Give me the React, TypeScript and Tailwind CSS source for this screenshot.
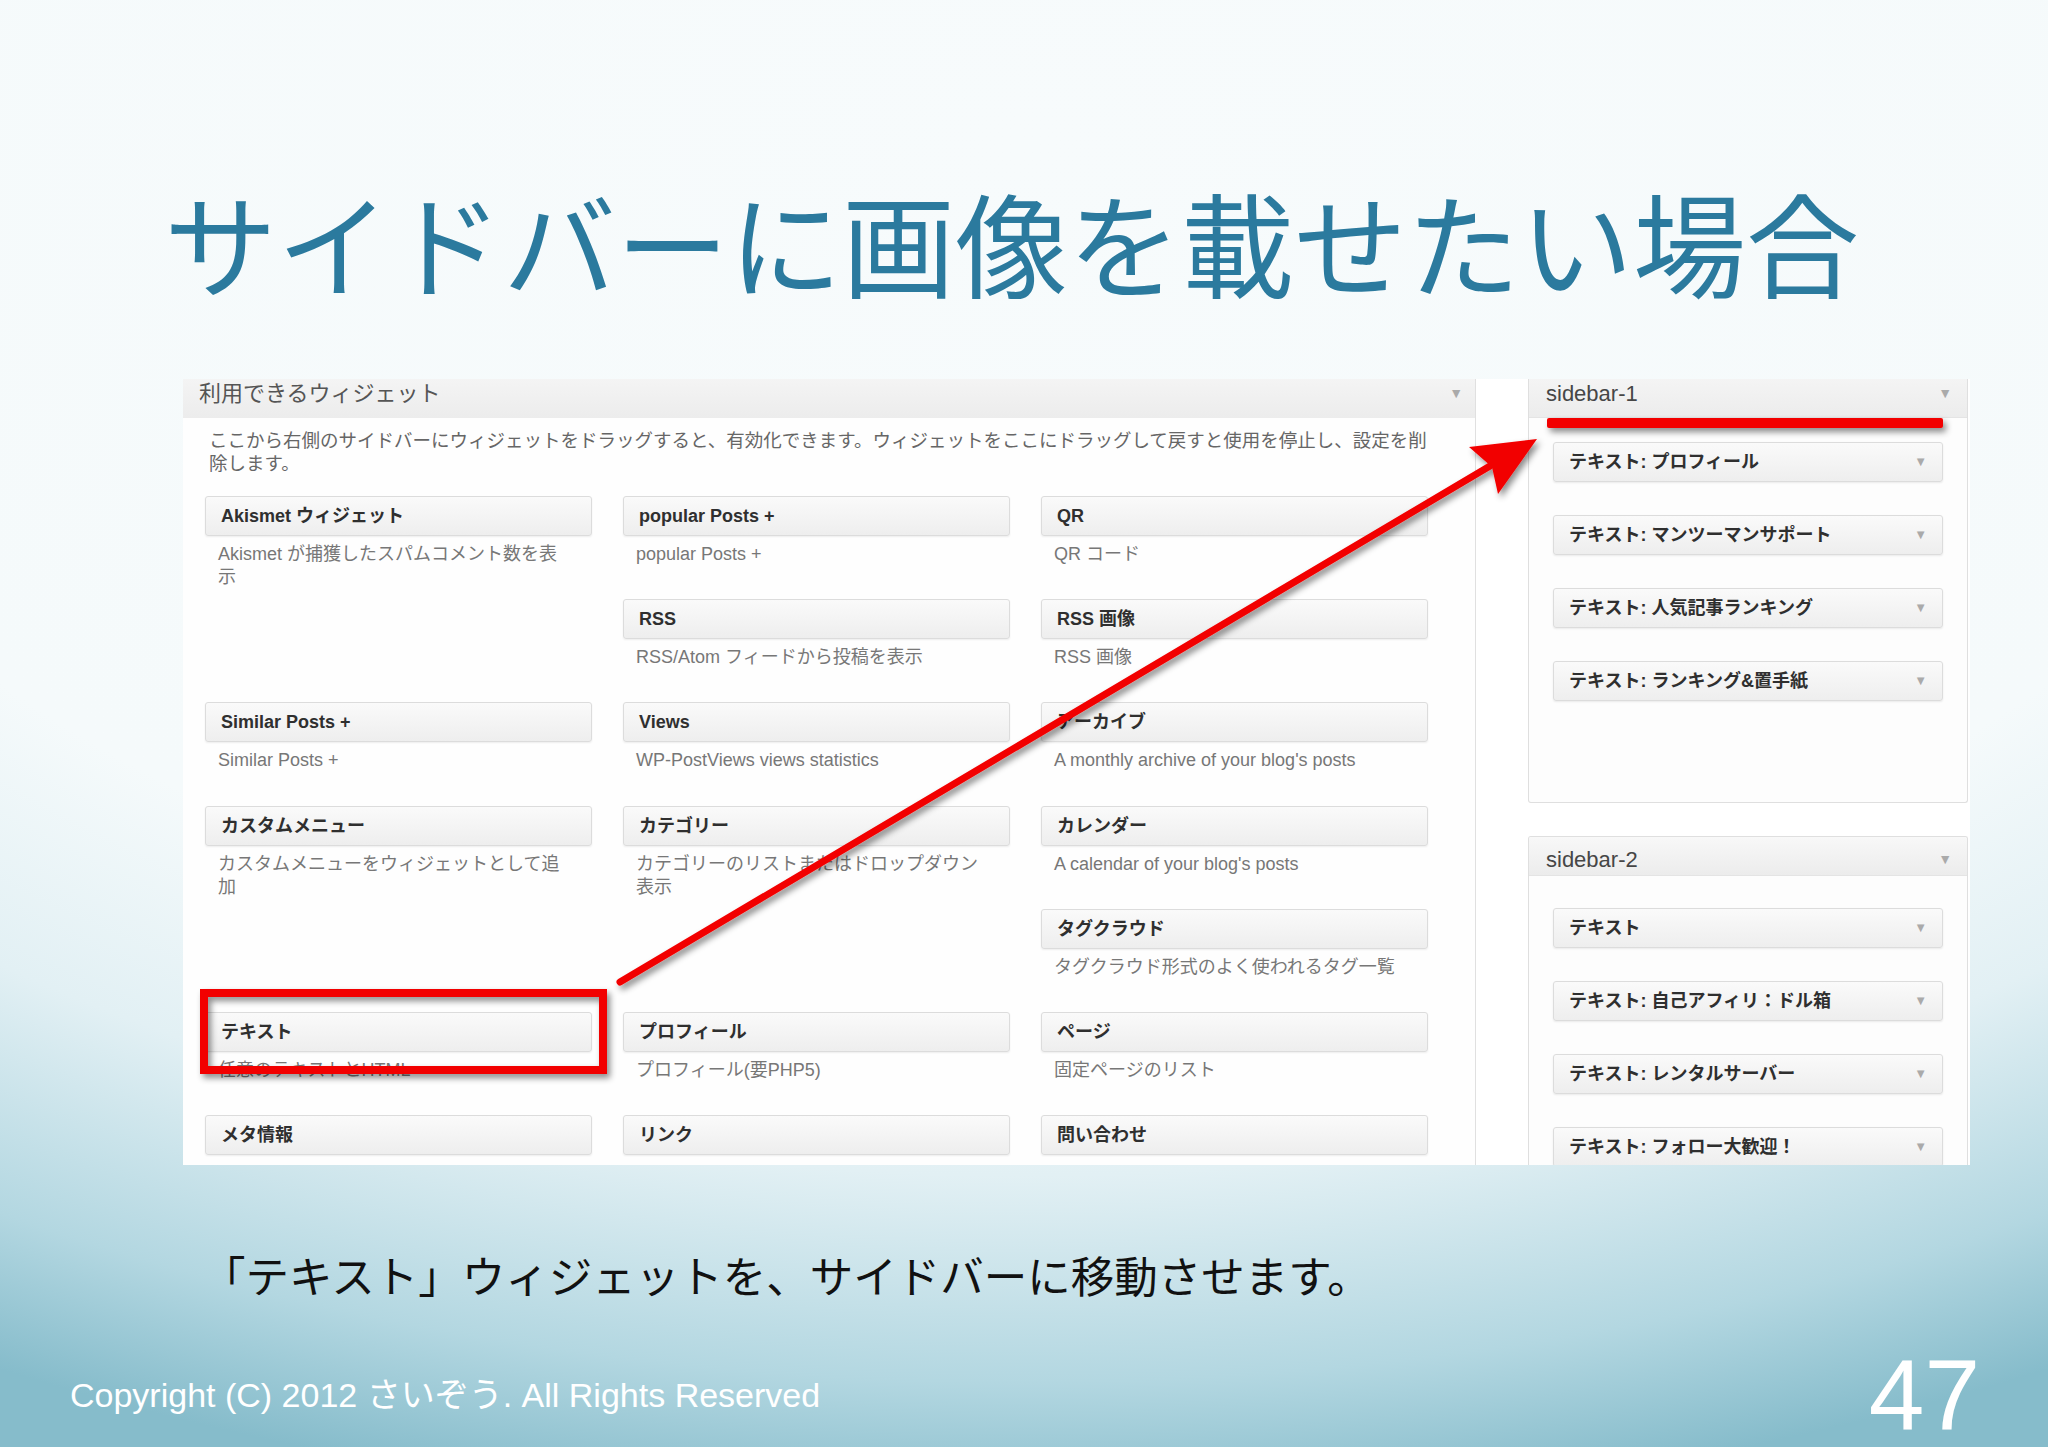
import React from "react";

type W = { t: string; d?: string[] } | null;

const rows: W[][] = [
  [
    { t: "Akismet ウィジェット", d: ["Akismet が捕獲したスパムコメント数を表", "示"] },
    { t: "popular Posts +", d: ["popular Posts +"] },
    { t: "QR", d: ["QR コード"] },
  ],
  [null, { t: "RSS", d: ["RSS/Atom フィードから投稿を表示"] }, { t: "RSS 画像", d: ["RSS 画像"] }],
  [
    { t: "Similar Posts +", d: ["Similar Posts +"] },
    { t: "Views", d: ["WP-PostViews views statistics"] },
    { t: "アーカイブ", d: ["A monthly archive of your blog's posts"] },
  ],
  [
    { t: "カスタムメニュー", d: ["カスタムメニューをウィジェットとして追", "加"] },
    { t: "カテゴリー", d: ["カテゴリーのリストまたはドロップダウン", "表示"] },
    { t: "カレンダー", d: ["A calendar of your blog's posts"] },
  ],
  [null, null, { t: "タグクラウド", d: ["タグクラウド形式のよく使われるタグ一覧"] }],
  [
    { t: "テキスト", d: ["任意のテキストとHTML"] },
    { t: "プロフィール", d: ["プロフィール(要PHP5)"] },
    { t: "ページ", d: ["固定ページのリスト"] },
  ],
  [{ t: "メタ情報" }, { t: "リンク" }, { t: "問い合わせ" }],
];

const sidebar1 = [
  "テキスト: プロフィール",
  "テキスト: マンツーマンサポート",
  "テキスト: 人気記事ランキング",
  "テキスト: ランキング&置手紙",
];

const sidebar2 = [
  "テキスト",
  "テキスト: 自己アフィリ：ドル箱",
  "テキスト: レンタルサーバー",
  "テキスト: フォロー大歓迎！",
];

function WidgetCell({ w }: { w: W }) {
  if (!w) return <div />;
  return (
    <div className="flex flex-col">
      <div className="h-[40px] shrink-0 rounded-[3px] border border-[#dcdcdc] bg-[linear-gradient(to_bottom,#fafafa,#eeeeee)] pl-[15px] text-[18px] font-bold leading-[38px] whitespace-nowrap text-[#2f2f2f] shadow-[0_1px_2px_rgba(0,0,0,0.07)]">
        {w.t}
      </div>
      {w.d && (
        <div className="mt-[7px] pl-[13px] text-[18px] leading-[23px] whitespace-nowrap text-[#777]">
          {w.d.map((line, i) => (
            <div key={i}>{line}</div>
          ))}
        </div>
      )}
    </div>
  );
}

function SideBox({ t }: { t: string }) {
  return (
    <div className="flex h-[40px] shrink-0 items-center justify-between rounded-[3px] border border-[#dcdcdc] bg-[linear-gradient(to_bottom,#fafafa,#eeeeee)] pl-[15px] pr-[15px] shadow-[0_1px_2px_rgba(0,0,0,0.08)]">
      <span className="text-[18px] font-bold whitespace-nowrap text-[#2f2f2f]">{t}</span>
      <span className="text-[13px] text-[#aaaaaa]">▼</span>
    </div>
  );
}

function SideHeader({ label, cropped }: { label: string; cropped?: boolean }) {
  return (
    <div
      className={
        cropped
          ? "flex h-[39px] shrink-0 items-center justify-between border-b border-[#e4e4e4] bg-[linear-gradient(to_bottom,#f4f4f4,#ececec)] pb-[10px] pl-[17px] pr-[15px]"
          : "flex h-[39px] shrink-0 items-center justify-between border-b border-[#e4e4e4] bg-[linear-gradient(to_bottom,#f8f8f8,#ececec)] pt-[6px] pl-[17px] pr-[15px]"
      }
    >
      <span className="text-[22px] text-[#464646]">{label}</span>
      <span className="text-[14px] text-[#aaaaaa]">▼</span>
    </div>
  );
}

export default function App() {
  return (
    <div className="relative h-[1447px] w-[2048px] overflow-hidden bg-[radial-gradient(ellipse_110%_95%_at_50%_10%,#f7fbfc_0%,#f5fafb_60%,#e2f0f4_75%,#b3d7e1_90%,#86bccb_100%)] font-['Liberation_Sans','Noto_Sans_CJK_JP',sans-serif]">
      <div className="flex flex-col">
        <h1 className="mt-[184px] pl-[164px] font-['Noto_Sans_CJK_JP',sans-serif] text-[113px] font-normal leading-[113px] whitespace-nowrap text-[#2b7a9e]">
          サイドバーに画像を載せたい場合
        </h1>

        <div className="mt-[82px] ml-[183px] flex h-[786px] w-[1787px] bg-white">
          {/* Available widgets panel */}
          <div className="flex h-[786px] w-[1293px] shrink-0 flex-col overflow-hidden border-r border-[#e0e0e0] bg-[#fefefe]">
            <div className="flex h-[39px] shrink-0 items-center justify-between bg-[linear-gradient(to_bottom,#f4f4f4,#ececec)] pb-[10px] pl-[16px] pr-[12px]">
              <span className="text-[22px] text-[#555]">利用できるウィジェット</span>
              <span className="text-[14px] text-[#aaaaaa]">▼</span>
            </div>
            <p className="pl-[26px] pt-[11px] text-[18.5px] leading-[23px] whitespace-nowrap text-[#666]">
              ここから右側のサイドバーにウィジェットをドラッグすると、有効化できます。ウィジェットをここにドラッグして戻すと使用を停止し、設定を削
              <br />
              除します。
            </p>
            <div className="mt-[21px] grid auto-rows-[103.2px] grid-cols-[387px_387px_387px] gap-x-[31px] pl-[22px]">
              {rows.map((r, ri) =>
                r.map((w, ci) => <WidgetCell key={`${ri}-${ci}`} w={w} />)
              )}
            </div>
          </div>

          {/* Sidebars */}
          <div className="ml-[52px] flex h-[786px] w-[440px] shrink-0 flex-col">
            <div className="flex h-[424px] shrink-0 flex-col overflow-hidden rounded-b-[3px] border border-t-0 border-[#dfdfdf] bg-[#fdfdfd]">
              <SideHeader label="sidebar-1" cropped />
              <div className="flex flex-col gap-[33px] px-[24px] pt-[24px]">
                {sidebar1.map((t) => (
                  <SideBox key={t} t={t} />
                ))}
              </div>
            </div>
            <div className="mt-[33px] flex min-h-0 flex-1 flex-col overflow-hidden rounded-t-[3px] border border-b-0 border-[#dfdfdf] bg-[#fdfdfd]">
              <SideHeader label="sidebar-2" />
              <div className="flex flex-col gap-[33px] px-[24px] pt-[32px]">
                {sidebar2.map((t) => (
                  <SideBox key={t} t={t} />
                ))}
              </div>
            </div>
          </div>
        </div>

        <p className="mt-[88px] pl-[202px] font-['Noto_Sans_CJK_JP',sans-serif] text-[43.5px] leading-[44px] whitespace-nowrap text-[#111]">
          「テキスト」ウィジェットを、サイドバーに移動させます。
        </p>

        <div className="mt-[48px] flex justify-between pl-[70px] pr-[68px]">
          <span className="mt-[33px] text-[34px] leading-[34px] whitespace-nowrap text-white">
            Copyright (C) 2012 さいぞう. All Rights Reserved
          </span>
          <span className="text-[100px] leading-[100px] text-white">47</span>
        </div>
      </div>

      {/* Red annotations drawn over the screenshot */}
      <svg
        className="pointer-events-none absolute inset-0"
        width="2048"
        height="1447"
        viewBox="0 0 2048 1447"
      >
        <defs>
          <filter id="sh" x="-10%" y="-10%" width="130%" height="140%">
            <feDropShadow dx="3" dy="4" stdDeviation="3" floodColor="#000" floodOpacity="0.45" />
          </filter>
        </defs>
        <g filter="url(#sh)">
          <rect x="1547" y="418" width="396" height="10" rx="2" fill="#f20000" />
          <rect x="204" y="993" width="399" height="77" fill="none" stroke="#f20000" strokeWidth="8" />
          <line x1="620" y1="982" x2="1490" y2="466" stroke="#f20000" strokeWidth="7" strokeLinecap="round" />
          <polygon points="1537,439 1498,494 1492,467 1469,447" fill="#f20000" />
        </g>
      </svg>
    </div>
  );
}
